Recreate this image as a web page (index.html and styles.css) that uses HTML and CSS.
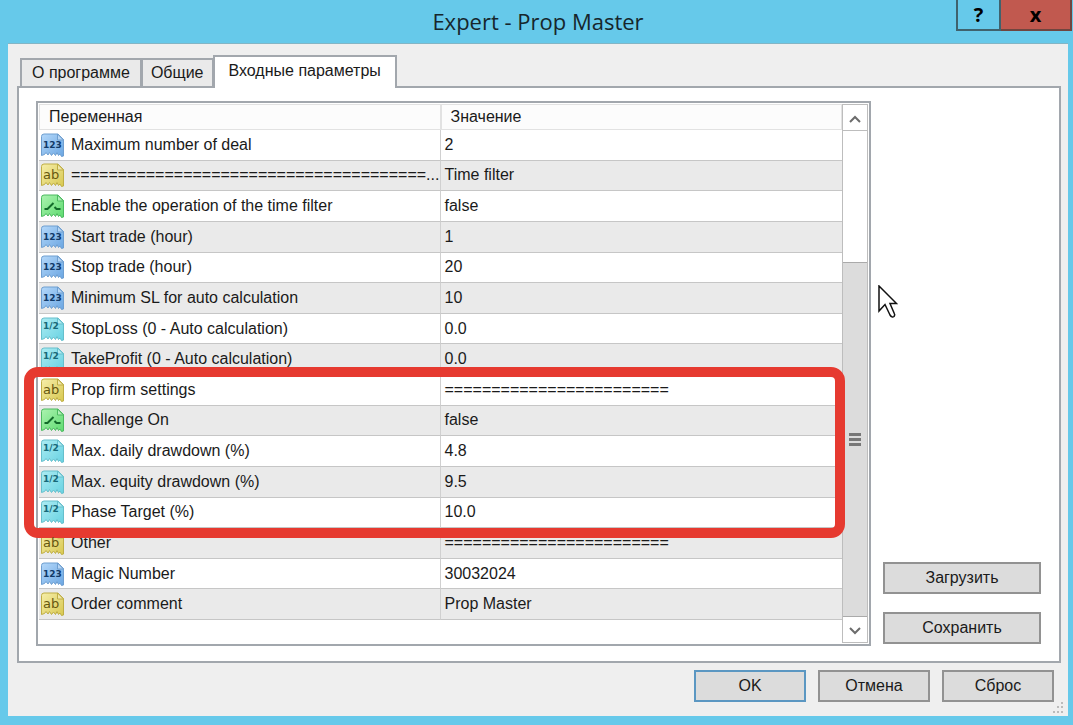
FILE: index.html
```html
<!DOCTYPE html>
<html lang="ru">
<head>
  <meta charset="UTF-8" />
  <meta name="viewport" content="width=device-width, initial-scale=1.0"/>
  <title>Expert - Prop Master</title>
  <link rel="stylesheet" href="styles.css">
</head>
<body>
  <!-- parameter type icons -->
  <svg class="sprite" aria-hidden="true">
    <symbol id="paper" viewBox="0 0 24 24">
      <path d="M1 3.500Q1 1 3.500 1H17.500L23 6.500V23L21 23.500L19.500 21L18 22.500L16.500 19.500L15 22.500L13 20L11 22.500L9 19.500L7.500 22L5.500 19.500L4 21.500L1 22.500Z"/>
      <path d="M17 1V7H23Z" fill="#fff" fill-opacity=".35"/>
    </symbol>
    <symbol id="switch" viewBox="0 0 24 24">
      <path d="M4 15H7L13 9M14 13L16 15H20" fill="none" stroke="#126b2a" stroke-width="2"/>
    </symbol>
    <linearGradient id="blue" x1="0" y1="0" x2="1" y2="1">
      <stop offset="0" stop-color="#b4d8fa"/><stop offset="1" stop-color="#6ba6e2"/>
    </linearGradient>
    <linearGradient id="yellow" x1="0" y1="0" x2="1" y2="1">
      <stop offset="0" stop-color="#f6eeaa"/><stop offset="1" stop-color="#d8c850"/>
    </linearGradient>
    <linearGradient id="green" x1="0" y1="0" x2="1" y2="1">
      <stop offset="0" stop-color="#acf3b0"/><stop offset="1" stop-color="#5edb70"/>
    </linearGradient>
    <linearGradient id="cyan" x1="0" y1="0" x2="1" y2="1">
      <stop offset="0" stop-color="#acecf3"/><stop offset="1" stop-color="#68d2e2"/>
    </linearGradient>
  </svg>

  <div class="window">
    <header class="titlebar">
      <h1>Expert - Prop Master</h1>
      <div class="window-buttons">
        <button class="help">?</button>
        <button class="close">x</button>
      </div>
    </header>

    <main class="client">
      <div class="tabs" role="tablist">
        <button class="tab" role="tab">О программе</button>
        <button class="tab" role="tab">Общие</button>
        <button class="tab active" role="tab" aria-selected="true">Входные параметры</button>
      </div>

      <section class="page" role="tabpanel">
        <div class="list">
          <div class="table-wrap">
            <table>
              <thead>
                <tr><th>Переменная</th><th>Значение</th></tr>
              </thead>
              <tbody>
                <tr><td><div class="name"><span class="icon int"><svg><use href="#paper"/></svg><b>123</b></span>Maximum number of deal</div></td><td>2</td></tr>
                <tr><td><div class="name"><span class="icon str"><svg><use href="#paper"/></svg><b>ab</b></span>======================================...</div></td><td>Time filter</td></tr>
                <tr><td><div class="name"><span class="icon bool"><svg><use href="#paper"/><use href="#switch"/></svg></span>Enable the operation of the time filter</div></td><td>false</td></tr>
                <tr><td><div class="name"><span class="icon int"><svg><use href="#paper"/></svg><b>123</b></span>Start trade (hour)</div></td><td>1</td></tr>
                <tr><td><div class="name"><span class="icon int"><svg><use href="#paper"/></svg><b>123</b></span>Stop trade (hour)</div></td><td>20</td></tr>
                <tr><td><div class="name"><span class="icon int"><svg><use href="#paper"/></svg><b>123</b></span>Minimum SL for auto calculation</div></td><td>10</td></tr>
                <tr><td><div class="name"><span class="icon real"><svg><use href="#paper"/></svg><b>1/2</b></span>StopLoss (0 - Auto calculation)</div></td><td>0.0</td></tr>
                <tr><td><div class="name"><span class="icon real"><svg><use href="#paper"/></svg><b>1/2</b></span>TakeProfit (0 - Auto calculation)</div></td><td>0.0</td></tr>
                <tr><td><div class="name"><span class="icon str"><svg><use href="#paper"/></svg><b>ab</b></span>Prop firm settings</div></td><td>========================</td></tr>
                <tr><td><div class="name"><span class="icon bool"><svg><use href="#paper"/><use href="#switch"/></svg></span>Challenge On</div></td><td>false</td></tr>
                <tr><td><div class="name"><span class="icon real"><svg><use href="#paper"/></svg><b>1/2</b></span>Max. daily drawdown (%)</div></td><td>4.8</td></tr>
                <tr><td><div class="name"><span class="icon real"><svg><use href="#paper"/></svg><b>1/2</b></span>Max. equity drawdown (%)</div></td><td>9.5</td></tr>
                <tr><td><div class="name"><span class="icon real"><svg><use href="#paper"/></svg><b>1/2</b></span>Phase Target (%)</div></td><td>10.0</td></tr>
                <tr><td><div class="name"><span class="icon str"><svg><use href="#paper"/></svg><b>ab</b></span>Other</div></td><td>========================</td></tr>
                <tr><td><div class="name"><span class="icon int"><svg><use href="#paper"/></svg><b>123</b></span>Magic Number</div></td><td>30032024</td></tr>
                <tr><td><div class="name"><span class="icon str"><svg><use href="#paper"/></svg><b>ab</b></span>Order comment</div></td><td>Prop Master</td></tr>
              </tbody>
            </table>
          </div>
          <div class="scrollbar">
            <button aria-label="Вверх"><svg viewBox="0 0 12 8"><path d="M1 7L6 2L11 7"/></svg></button>
            <div class="track"><div class="thumb"><i></i><i></i><i></i></div></div>
            <button aria-label="Вниз"><svg viewBox="0 0 12 8"><path d="M1 1L6 6L11 1"/></svg></button>
          </div>
          <div class="highlight"></div>
        </div>

        <div class="side">
          <button class="btn">Загрузить</button>
          <button class="btn">Сохранить</button>
        </div>
        <svg class="cursor" viewBox="0 0 20 34"><path d="M1 1V26L7 19.500L12 30Q14 33 16 31.500Q17 30 16.500 29L12 18.500H18.500Z"/></svg>
      </section>

      <footer class="footer">
        <button class="btn primary">OK</button>
        <button class="btn">Отмена</button>
        <button class="btn">Сброс</button>
      </footer>
      <svg class="grip" viewBox="0 0 12 12"><path d="M9 0h2v2h-2zM5 4h2v2h-2zM9 4h2v2h-2zM1 9h2v2h-2zM5 9h2v2h-2zM9 9h2v2h-2z"/></svg>
    </main>
  </div>
</body>
</html>
```
FILE: styles.css
```css
* {
  box-sizing: border-box;
}

body {
  margin: 0;
  font-family: "Liberation Sans", Arial, sans-serif;
  font-size: 16px;
  color: #1a1a1a;
}

button {
  font: inherit;
  color: inherit;
  margin: 0;
  padding: 0;
}

.sprite {
  position: absolute;
  width: 0;
  height: 0;
}

.window {
  display: flex;
  flex-direction: column;
  min-height: 100vh;
  padding: 0 5px 9px 8px;
  background: #66c9ea;
}

/* title bar */
.titlebar {
  display: grid;
  grid-template-columns: 1fr auto 1fr;
  height: 43px;
}

h1 {
  grid-column: 2;
  margin: 0;
  font: 22px/42px "Open Sans", sans-serif;
  color: #16262c;
}

.window-buttons {
  display: flex;
  justify-self: end;
  height: 31px;
  margin-right: -4px;
}

.window-buttons button {
  width: 45px;
  border: 2px solid #3f626d;
  border-top: 0;
  background: transparent;
  font: bold 20px/26px "Open Sans", sans-serif;
  color: #000;
}

.window-buttons .close {
  width: 71px;
  border-color: #70453f;
  border-left: 0;
  background: #c1594f;
}

.client {
  position: relative;
  flex: 1;
  display: flex;
  flex-direction: column;
  padding: 11px 7px 14px 9px;
  border-top: 1px solid #83b5c5;
  background: #efefef;
}

/* tabs */
.tabs {
  display: flex;
  align-items: flex-end;
  height: 31px;
  padding-left: 3px;
}

.tab {
  height: 28px;
  padding: 0 10px;
  border: 2px solid #a2a7ad;
  border-bottom: 0;
  background: #eaeaea;
}

.tab + .tab {
  margin-left: -1px;
  padding: 0 8px;
}

.tab + .tab.active {
  position: relative;
  z-index: 1;
  height: 33px;
  margin-bottom: -2px;
  padding: 0 14px 4px;
  background: #fff;
}

.page {
  position: relative;
  flex: 1;
  display: flex;
  gap: 12px;
  padding: 13px 18px 15px 17px;
  border: 2px solid #a2a7ad;
  background: #fff;
}

/* parameter list */
.list {
  position: relative;
  flex: 1;
  display: flex;
  padding: 1px;
  border: 2px solid #a2a7ad;
}

.table-wrap {
  flex: 1;
}

table {
  width: 100%;
  height: 516px;
  border-collapse: separate;
  border-spacing: 0;
  table-layout: fixed;
}

th {
  height: 26px;
  padding: 0 9px;
  border: 1px solid #e2e2e2;
  background: #fcfcfc;
  font-weight: normal;
  text-align: left;
}

td {
  height: 30px;
  padding: 0 4px;
  border-bottom: 1px solid #c6c6c6;
}

td:first-child {
  padding: 0 0 0 1px;
  border-right: 1px solid #d0d0d0;
}

tbody tr:nth-child(even) {
  background: #eaeaea;
}

.name {
  display: flex;
  align-items: center;
  gap: 6px;
  white-space: nowrap;
}

.icon {
  display: grid;
  flex: none;
  width: 25px;
  height: 24px;
}

.icon svg,
.icon b {
  grid-area: 1 / 1;
}

.icon svg {
  width: 25px;
  height: 24px;
}

.icon b {
  z-index: 1;
  font: bold 9px/24px "DejaVu Sans", sans-serif;
  padding-left: 3px;
}

.int svg {
  fill: url(#blue);
  stroke: #6f9fd0;
}

.int b {
  color: #113a68;
}

.str svg {
  fill: url(#yellow);
  stroke: #bfae44;
}

.str b {
  font-size: 13px;
  font-weight: normal;
  color: #665710;
}

.bool svg {
  fill: url(#green);
  stroke: #4cba60;
}

.real svg {
  fill: url(#cyan);
  stroke: #66bfcc;
}

.real b {
  line-height: 18px;
  color: #176878;
}

/* scrollbar */
.scrollbar {
  display: flex;
  flex-direction: column;
  width: 26px;
  border: 1px solid #bdbdbd;
}

.scrollbar button {
  height: 25px;
  border: 0;
  background: #fff;
}

.scrollbar button svg {
  width: 12px;
  height: 8px;
  fill: none;
  stroke: #6c6c6c;
  stroke-width: 2;
}

.track {
  flex: 1;
  display: flex;
  align-items: flex-end;
  border-top: 1px solid #bdbdbd;
}

.thumb {
  flex: 1;
  display: flex;
  flex-direction: column;
  align-items: center;
  justify-content: center;
  gap: 2px;
  height: 73%;
  border: solid #aaa;
  border-width: 1px 0;
  background: #dcdcdc;
}

.thumb i {
  width: 12px;
  height: 3px;
  background: #777;
}

/* red frame round the prop firm rows */
.highlight {
  position: absolute;
  top: 264px;
  left: -14px;
  right: 24px;
  height: 171px;
  border: 10px solid #e63a30;
  border-radius: 14px;
}

.side {
  display: flex;
  flex-direction: column;
  justify-content: flex-end;
  gap: 18px;
  width: 158px;
  padding-bottom: 2px;
}

.btn {
  height: 32px;
  border: 2px solid #929292;
  background: #dcdcdc;
}

.btn.primary {
  border-color: #5b97c2;
}

.footer {
  display: flex;
  justify-content: flex-end;
  gap: 12px;
  padding: 7px 7px 0 0;
}

.footer .btn {
  width: 112px;
}

.cursor {
  position: absolute;
  top: 197px;
  right: 161px;
  width: 20px;
  height: 34px;
  fill: #fff;
  stroke: #111;
  stroke-width: 1.5;
}

.grip {
  position: absolute;
  right: 4px;
  bottom: 2px;
  width: 12px;
  height: 12px;
  fill: #bbb;
}
```
